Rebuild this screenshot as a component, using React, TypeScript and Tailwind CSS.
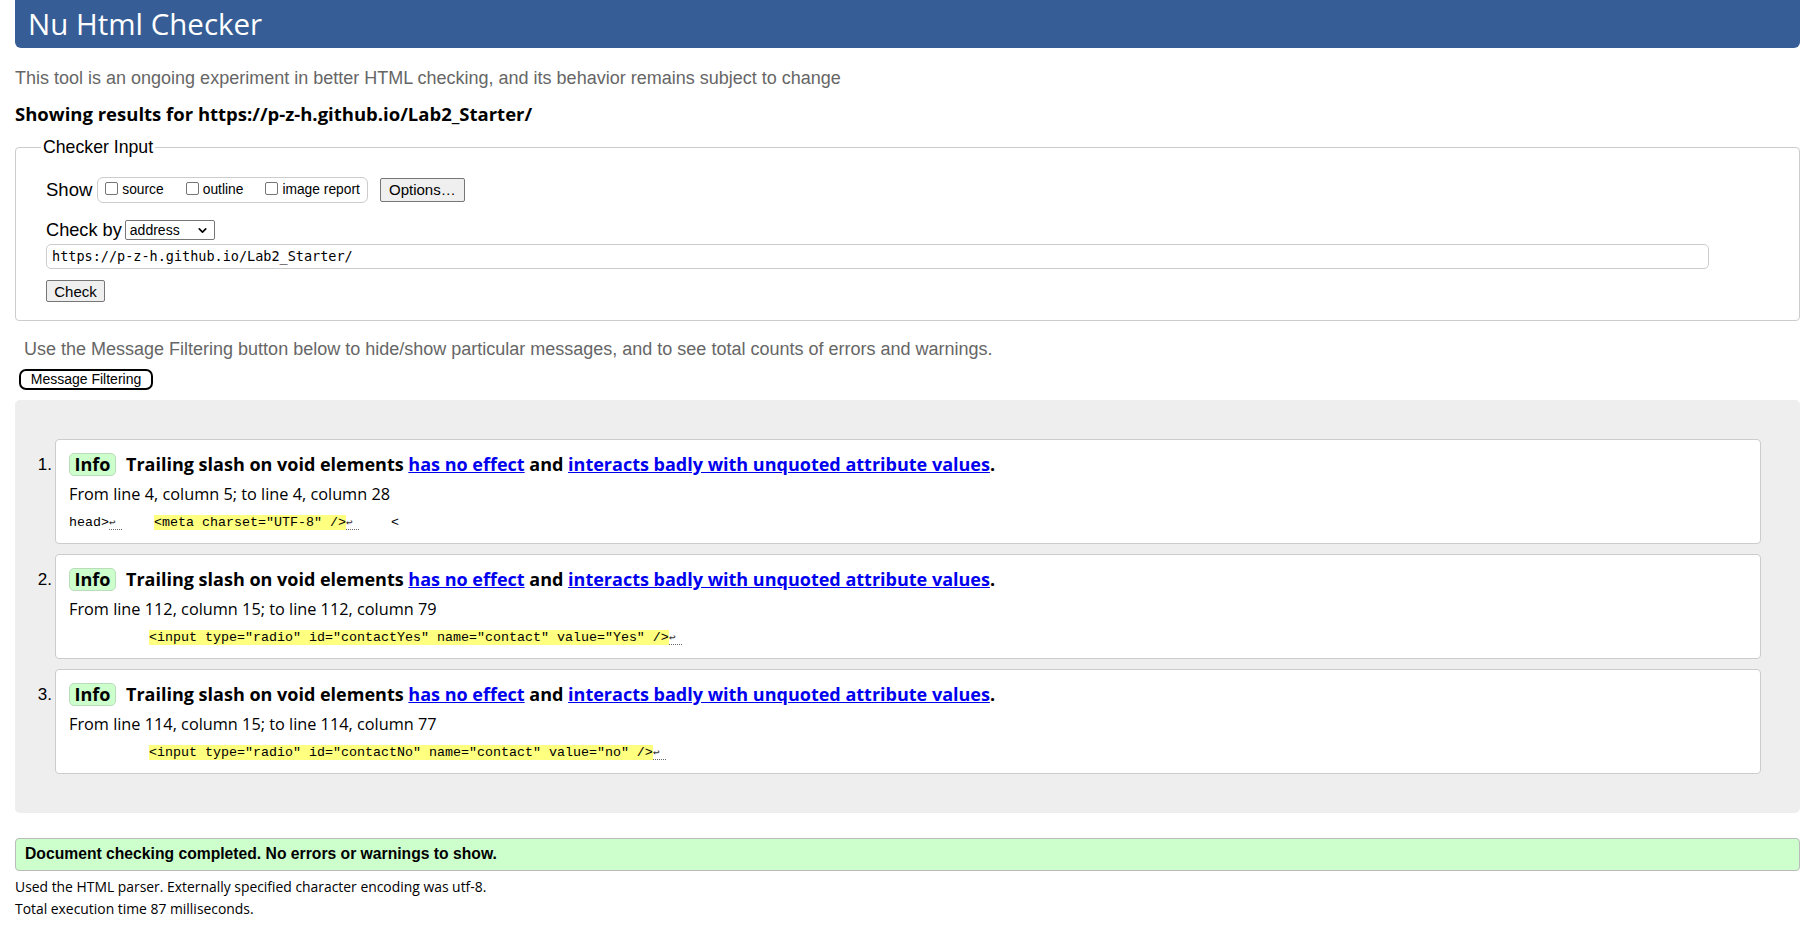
import { ChevronDown } from "lucide-react";

const arial = "font-['Liberation_Sans',Arial,sans-serif]";
const segoe = "font-['Open_Sans','Noto_Sans',sans-serif]";
const mono = "font-['Liberation_Mono','DejaVu_Sans_Mono',monospace]";

type Msg = {
  n: number;
  from: string;
  lead: string;
  code: string;
  tail: string;
  startLf?: boolean;
};

const messages: Msg[] = [
  {
    n: 1,
    from: "From line 4, column 5; to line 4, column 28",
    lead: "head>",
    startLf: true,
    code: '<meta charset="UTF-8" />',
    tail: "    <",
  },
  {
    n: 2,
    from: "From line 112, column 15; to line 112, column 79",
    lead: "          ",
    code: '<input type="radio" id="contactYes" name="contact" value="Yes" />',
    tail: "",
  },
  {
    n: 3,
    from: "From line 114, column 15; to line 114, column 77",
    lead: "          ",
    code: '<input type="radio" id="contactNo" name="contact" value="no" />',
    tail: "",
  },
];

// line break marker like the validator's "lf" span
const Lf = () => (
  <span className="inline-block w-[13px] border-b border-dotted border-[#666] leading-[13px] text-[#333] font-['DejaVu_Sans_Mono',monospace] text-[11px]">
    ↩
  </span>
);

const Checkbox = ({ label }: { label: string }) => (
  <label className="flex items-center">
    <span className="mb-[3px] mr-[4px] inline-block h-[13px] w-[13px] rounded-[2px] border border-[#767676] bg-white" />
    <span className="text-[13.8px] text-black">{label}</span>
  </label>
);

const MessageItem = ({ m }: { m: Msg }) => (
  <li className="flex">
    <span className={`${arial} w-[40px] shrink-0 pr-[3px] pt-[14px] text-right text-[17px] leading-[23px] text-black`}>
      {m.n}.
    </span>
    <div className="h-[105px] flex-1 rounded-[4px] border border-[#cccccc] bg-white pl-[13px] pt-[13px]">
      <div className={`${segoe} flex h-[23px] items-center text-[18px] font-bold text-black`}>
        <span className="mr-[10px] flex h-[23px] w-[47px] items-center justify-center rounded-[5px] border border-[#b9dcb9] bg-[#ccffcc] text-[18px]">
          Info
        </span>
        <span>
          Trailing slash on void elements{" "}
          <a className="text-[#0000ee] underline" href="#">has no effect</a> and{" "}
          <a className="text-[#0000ee] underline" href="#">
            interacts badly with unquoted attribute values
          </a>
          .
        </span>
      </div>
      <p className={`${segoe} mt-[7px] text-[16.3px] leading-[22px] text-black`}>{m.from}</p>
      <p className={`${mono} mt-[9px] whitespace-pre text-[13.33px] leading-[18px] text-black`}>
        {m.lead}
        {m.startLf && <Lf />}
        {m.startLf && "    "}
        <span className="bg-[#ffff80]">{m.code}</span>
        <Lf />
        {m.tail}
      </p>
    </div>
  </li>
);

export default function App() {
  return (
    <div className={`${arial} min-h-[926px] bg-white pl-[15px] pr-[18px]`}>
      <h1 className={`${segoe} flex h-[48px] items-center rounded-b-[6px] bg-[#365d95] pl-[13px] text-[29.5px] font-normal text-white`}>
        Nu Html Checker
      </h1>

      <p className="mt-[20px] text-[18px] leading-[20px] text-[#666666]">
        This tool is an ongoing experiment in better HTML checking, and its behavior remains subject to change
      </p>
      <p className={`${segoe} mt-[14px] text-[18.5px] font-bold leading-[23px] text-black`}>
        Showing results for https://p-z-h.github.io/Lab2_Starter/
      </p>

      <fieldset className="mt-[12px] rounded-[4px] border border-[#cccccc] pb-[16px] pl-[30px]">
        <legend className="-ml-[5px] px-[2px] text-[17.7px] leading-[20px] text-black">Checker Input</legend>

        <div className="mt-[19px] flex items-center">
          <span className="mr-[5px] text-[18.5px] text-black">Show</span>
          <div className="flex h-[26px] items-center gap-[22px] rounded-[6px] border border-[#cccccc] pl-[7px] pr-[7px]">
            <Checkbox label="source" />
            <Checkbox label="outline" />
            <Checkbox label="image report" />
          </div>
          <button className="ml-[12px] h-[24px] w-[85px] rounded-[2px] border border-[#767676] bg-[#efefef] text-[15px] text-black">
            Options…
          </button>
        </div>

        <div className="mt-[16px] flex h-[21px] items-center">
          <span className="mr-[3px] text-[18.2px] text-black">Check by</span>
          <div className="flex h-[20px] w-[90px] items-center justify-between rounded-[2px] border border-[#767676] bg-white pl-[4px] pr-[5px] text-[14px] text-black">
            <span>address</span>
            <ChevronDown size={13} strokeWidth={3} />
          </div>
        </div>

        <div className="mt-[3px] flex h-[25px] w-[1663px] items-center rounded-[5px] border border-[#cccccc] pl-[5px] font-['DejaVu_Sans_Mono',monospace] text-[13.5px] text-black">
          https://p-z-h.github.io/Lab2_Starter/
        </div>

        <button className="mt-[11px] h-[22px] w-[59px] rounded-[2px] border border-[#767676] bg-[#efefef] text-[15px] text-black">
          Check
        </button>
      </fieldset>

      <p className="mt-[18px] pl-[9px] text-[18px] leading-[20px] text-[#666666]">
        Use the Message Filtering button below to hide/show particular messages, and to see total counts of errors and warnings.
      </p>
      <button className="ml-[4px] mt-[10px] h-[21px] w-[134px] rounded-[7px] border-2 border-black bg-white text-[14px] leading-[17px] text-black">
        Message Filtering
      </button>

      <div className="mt-[9px] rounded-[5px] bg-[#eeeeee] pb-[39px] pr-[39px] pt-[39px]">
        <ol className="flex flex-col gap-[10px]">
          {messages.map((m) => (
            <MessageItem key={m.n} m={m} />
          ))}
        </ol>
      </div>

      <div className="mt-[25px] flex h-[33px] items-center rounded-[4px] border border-[#bbbbbb] bg-[#ccffcc] pl-[9px] text-[15.7px] font-bold text-black">
        Document checking completed. No errors or warnings to show.
      </div>
      <p className={`${segoe} mt-[5px] text-[13.9px] leading-[22px] text-black`}>
        Used the HTML parser. Externally specified character encoding was utf-8.
      </p>
      <p className={`${segoe} text-[13.9px] leading-[22px] text-black`}>Total execution time 87 milliseconds.</p>
    </div>
  );
}
